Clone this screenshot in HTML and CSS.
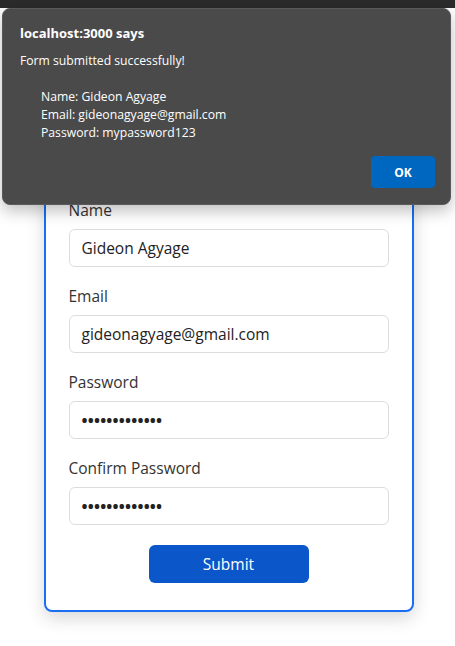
FILE: index.html
```html
<!DOCTYPE html>
<html>
<head>
<meta charset="utf-8">
<link rel="stylesheet" href="styles.css">
</head>
<body>
<div class="topbar"></div>
<main class="page">
  <form class="card">
    <div class="group">
      <label class="label">Name</label>
      <div class="input">Gideon Agyage</div>
    </div>
    <div class="group">
      <label class="label">Email</label>
      <div class="input">gideonagyage@gmail.com</div>
    </div>
    <div class="group">
      <label class="label">Password</label>
      <div class="input dots">•••••••••••••</div>
    </div>
    <div class="group">
      <label class="label">Confirm Password</label>
      <div class="input dots">•••••••••••••</div>
    </div>
    <div class="actions">
      <button type="button" class="submit">Submit</button>
    </div>
  </form>
</main>
<div class="dialog">
  <div class="dialog-title">localhost:3000 says</div>
  <div class="dialog-msg">Form submitted successfully!</div>
  <div class="dialog-details">
    <div>Name: Gideon Agyage</div>
    <div>Email: gideonagyage@gmail.com</div>
    <div>Password: mypassword123</div>
  </div>
  <div class="dialog-actions">
    <button type="button" class="ok">OK</button>
  </div>
</div>
</body>
</html>
```
FILE: styles.css
```css
html, body {
  margin: 0;
  padding: 0;
  background: #ffffff;
}
body {
  font-family: "Open Sans", "Noto Sans", sans-serif;
  width: 455px;
  height: 646px;
  overflow: hidden;
  position: relative;
}
.topbar {
  height: 8px;
  background: #2b2b2b;
}
.page {
  display: flex;
  justify-content: center;
  padding-top: 164px;
}
.card {
  box-sizing: border-box;
  width: 370px;
  margin-left: 2px;
  border: 2px solid #1a6ef5;
  border-radius: 8px;
  padding: 25px 23px 27px;
  background: #fff;
  box-shadow: 0 6px 18px rgba(0, 0, 0, 0.16);
}
.group {
  margin-bottom: 18px;
}
.label {
  display: block;
  font-size: 15.5px;
  line-height: 22px;
  color: #333;
  margin-bottom: 8px;
}
.input {
  box-sizing: border-box;
  height: 38px;
  border: 1px solid #dcdcdc;
  border-radius: 6px;
  padding: 0 12px;
  font-size: 15.5px;
  line-height: 36px;
  color: #222;
}
.dots {
  font-size: 16px;
  font-weight: 700;
  letter-spacing: 0.2px;
}
.actions {
  display: flex;
  justify-content: center;
  padding-top: 2px;
}
.submit {
  width: 160px;
  height: 38px;
  border: none;
  border-radius: 6px;
  background: #0b57c9;
  color: #fff;
  font-family: inherit;
  font-size: 15.5px;
}
.dialog {
  position: absolute;
  left: 2px;
  top: 8px;
  width: 449px;
  height: 197px;
  box-sizing: border-box;
  background: #4a4a4a;
  border: 1px solid #5a5a5a;
  border-radius: 8px;
  box-shadow: 0 6px 16px rgba(0, 0, 0, 0.25);
  padding: 15px 15px 15px 17px;
  color: #fff;
  font-size: 12.2px;
  line-height: 18px;
}
.dialog-title {
  font-weight: 700;
  font-size: 13px;
}
.dialog-msg {
  margin-top: 10px;
}
.dialog-details {
  margin-top: 18px;
  padding-left: 21px;
}
.dialog-actions {
  display: flex;
  justify-content: flex-end;
  margin-top: 14px;
}
.ok {
  width: 64px;
  height: 32px;
  border: none;
  border-radius: 4px;
  background: #0067c0;
  color: #fff;
  font-family: inherit;
  font-weight: 700;
  font-size: 12px;
}
```
